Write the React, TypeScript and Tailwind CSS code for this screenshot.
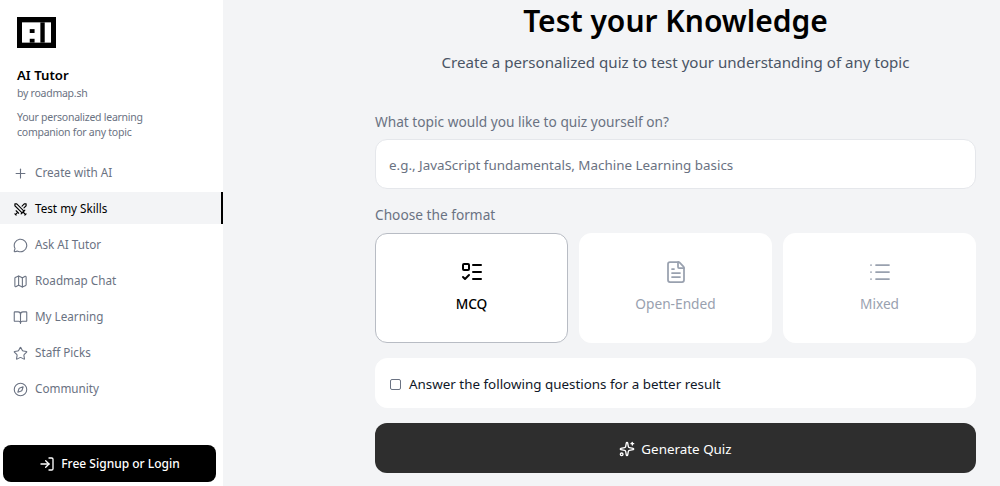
import React from 'react';
import {
  BookOpen,
  Compass,
  FileText,
  List,
  ListTodo,
  LogIn,
  Map,
  MessageCircle,
  Plus,
  Sparkles,
  Star,
  Swords,
} from 'lucide-react';

const navItems = [
  { label: 'Create with AI', icon: Plus },
  { label: 'Test my Skills', icon: Swords, active: true },
  { label: 'Ask AI Tutor', icon: MessageCircle },
  { label: 'Roadmap Chat', icon: Map },
  { label: 'My Learning', icon: BookOpen },
  { label: 'Staff Picks', icon: Star },
  { label: 'Community', icon: Compass },
];

const formats = [
  { label: 'MCQ', icon: ListTodo, active: true },
  { label: 'Open-Ended', icon: FileText },
  { label: 'Mixed', icon: List },
];

const Sidebar = () => (
  <aside className="flex h-[486px] w-[223px] shrink-0 flex-col bg-white">
    <div className="pt-[17px] pl-[17px]">
      <div className="flex h-[31px] w-[39px] items-center justify-center bg-black">
        <svg viewBox="0 0 30 21" className="h-[21px] w-[29px]">
          <rect width="30" height="21" fill="#fff" />
          <rect x="8" y="7" width="5" height="4" fill="#000" />
          <rect x="8" y="17" width="5" height="4" fill="#000" />
          <rect x="19" y="0" width="4.5" height="21" fill="#000" />
        </svg>
      </div>
      <h1 className="mt-[17px] text-[13.2px] leading-5 font-semibold text-black">AI Tutor</h1>
      <p className="text-[10.5px] leading-4 tracking-[-0.25px] text-gray-500">by roadmap.sh</p>
      <p className="mt-[9px] text-[10.5px] leading-[15px] tracking-[-0.25px] text-gray-500">
        Your personalized learning
        <br />
        companion for any topic
      </p>
    </div>
    <nav className="mt-[16px] flex flex-col gap-1">
      {navItems.map((item) => (
        <div
          key={item.label}
          className={`flex h-8 items-center gap-[7px] pt-[2px] pl-[13px] text-[11.7px] ${
            item.active ? 'border-r-2 border-black bg-gray-100 text-black' : 'text-gray-500'
          }`}
        >
          <item.icon className="size-[15px] shrink-0" strokeWidth={1.75} />
          <span>{item.label}</span>
        </div>
      ))}
    </nav>
    <div className="mt-auto pr-[7px] pb-[4px] pl-[3px]">
      <button className="flex h-[37px] w-full items-center justify-center gap-[6px] rounded-lg bg-black text-[12px] font-medium text-white">
        <LogIn className="size-4" />
        Free Signup or Login
      </button>
    </div>
  </aside>
);

export default function App() {
  return (
    <div className="flex h-[486px] w-[1000px] overflow-hidden bg-[#f3f4f6] font-['Noto_Sans',sans-serif]">
      <Sidebar />
      <main className="flex min-w-0 flex-1 flex-col pr-[24px] pl-[152px]">
        <h2 className="mt-[3px] text-center text-[30px] leading-9 font-semibold text-black">
          Test your Knowledge
        </h2>
        <p className="mt-[11px] text-center text-[15.1px] leading-6 text-gray-600">
          Create a personalized quiz to test your understanding of any topic
        </p>
        <label className="mt-[38px] block text-[13.7px] leading-5 text-gray-500">
          What topic would you like to quiz yourself on?
        </label>
        <div className="mt-[7px] flex h-[50px] items-center rounded-xl border border-gray-200 bg-white px-[13px] pt-[2px] text-[13.4px] text-gray-500">
          e.g., JavaScript fundamentals, Machine Learning basics
        </div>
        <label className="mt-[16px] block text-[13.7px] leading-5 text-gray-500">Choose the format</label>
        <div className="mt-[8px] grid grid-cols-3 gap-[11px]">
          {formats.map((f) => (
            <div
              key={f.label}
              className={`flex h-[110px] flex-col items-center justify-center gap-[10px] rounded-xl border bg-white pb-[2px] text-[13.7px] ${
                f.active ? 'border-[#b8bcc4] font-medium text-black' : 'border-white text-gray-400'
              }`}
            >
              <f.icon className="size-6" strokeWidth={f.active ? 2 : 1.75} />
              <span>{f.label}</span>
            </div>
          ))}
        </div>
        <div className="mt-[15px] flex h-[50px] items-center gap-2 rounded-xl border border-white bg-white px-[14px] pt-[2px] text-[13.4px] text-gray-900">
          <span className="size-[11px] rounded-[2px] border border-gray-500 bg-white" />
          Answer the following questions for a better result
        </div>
        <button className="mt-[15px] flex h-[50px] items-center justify-center gap-[6px] rounded-xl bg-[#2e2e2e] pt-[2px] text-[13.4px] text-white">
          <Sparkles className="size-4" />
          Generate Quiz
        </button>
      </main>
    </div>
  );
}
